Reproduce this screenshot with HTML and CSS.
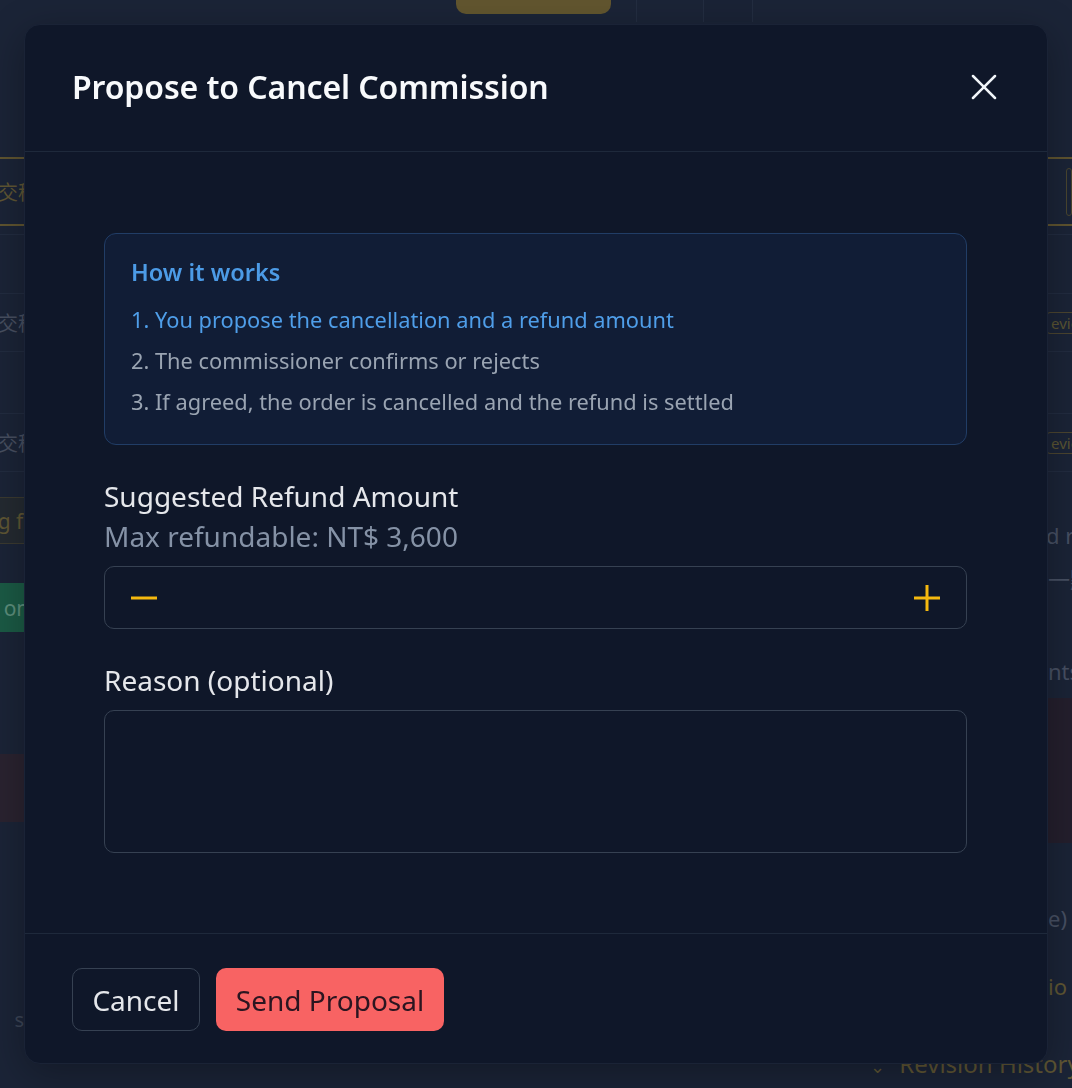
FILE: index.html
```html
<!DOCTYPE html>
<html lang="en">
<head>
<meta charset="utf-8">
<title>Propose to Cancel Commission</title>
<link rel="stylesheet" href="styles.css">
</head>
<body>
<div class="page">
  <div class="top-strip">
    <div class="top-left"></div>
    <div class="top-btn"></div>
    <div class="top-cell c1"></div>
    <div class="top-cell c2"></div>
    <div class="top-cell c3"></div>
    <div class="top-cell c4"></div>
  </div>
  <div class="page-main">
    <div class="side side-left">
      <div class="row row-gold"><span>交稿</span></div>
      <div class="row gap-a"></div>
      <div class="row row-text"><span>交稿</span></div>
      <div class="row gap-b"></div>
      <div class="row row-text"><span>交稿</span></div>
      <div class="chip chip-gold"><span>g fo</span></div>
      <div class="chip chip-green"><span>om</span></div>
      <div class="chip chip-red"></div>
      <div class="foot-text">s</div>
    </div>
    <div class="side side-right">
      <div class="row row-gold"><span class="pill"></span></div>
      <div class="row gap-a"></div>
      <div class="row row-text"><span class="badge">evie</span></div>
      <div class="row gap-b"></div>
      <div class="row row-text"><span class="badge">evie</span></div>
      <div class="r-text r1">d r</div>
      <div class="r-text r2">一點</div>
      <div class="r-text r3">nts</div>
      <div class="r-red"></div>
      <div class="r-text r4">e)</div>
      <div class="r-text r5 gold">io</div>
      <div class="r-text r6 gold"><span class="chev">⌄</span> Revision History</div>
    </div>
  </div>
</div>

<div class="overlay">
  <div class="modal" role="dialog" aria-labelledby="modal-title">
    <header class="modal-header">
      <h2 id="modal-title" class="modal-title">Propose to Cancel Commission</h2>
      <button class="close-btn" aria-label="Close">
        <svg width="26" height="26" viewBox="0 0 26 26" fill="none" stroke="currentColor" stroke-width="2.5" stroke-linecap="round"><path d="M2 2l22 22M24 2L2 24"/></svg>
      </button>
    </header>
    <div class="modal-body">
      <div class="info-box">
        <div class="info-title">How it works</div>
        <ol class="info-list">
          <li class="active">1. You propose the cancellation and a refund amount</li>
          <li>2. The commissioner confirms or rejects</li>
          <li>3. If agreed, the order is cancelled and the refund is settled</li>
        </ol>
      </div>
      <div class="field">
        <label class="field-label">Suggested Refund Amount</label>
        <div class="field-hint">Max refundable: NT$ 3,600</div>
        <div class="stepper">
          <button class="step-btn" aria-label="Decrease">
            <svg width="30" height="30" viewBox="0 0 30 30" fill="none" stroke="currentColor" stroke-width="3"><path d="M2 15h26" /></svg>
          </button>
          <input class="step-input" type="text" value="">
          <button class="step-btn" aria-label="Increase">
            <svg width="30" height="30" viewBox="0 0 30 30" fill="none" stroke="currentColor" stroke-width="3"><path d="M2 15h26M15 2v26" /></svg>
          </button>
        </div>
      </div>
      <div class="field field-reason">
        <label class="field-label">Reason (optional)</label>
        <textarea class="reason"></textarea>
      </div>
    </div>
    <footer class="modal-footer">
      <button class="btn btn-outline">Cancel</button>
      <button class="btn btn-danger">Send Proposal</button>
    </footer>
  </div>
</div>
</body>
</html>
```
FILE: styles.css
```css
* { box-sizing: border-box; }
html, body { margin: 0; padding: 0; }
body {
  width: 1072px;
  height: 1088px;
  overflow: hidden;
  background: #1b2437;
  font-family: "Noto Sans", "Open Sans", "Liberation Sans", "Noto Sans CJK TC", sans-serif;
  color: #e5e7eb;
}

/* ---------- background page (dimmed) ---------- */
.page { width: 1072px; height: 1088px; overflow: hidden; }
.top-strip {
  display: flex;
  height: 24px;
}
.top-left { width: 456px; }
.top-btn {
  width: 155px;
  height: 14px;
  background: #62562f;
  border-radius: 0 0 10px 10px;
}
.top-cell { height: 22px; border-left: 1px solid #232d41; }
.c1 { width: 25px; border-left: none; }
.c2 { width: 67px; }
.c3 { width: 49px; background: #1a2336; }
.c4 { width: 65px; }

.page-main {
  display: flex;
  justify-content: space-between;
  padding-top: 133px;
}
.side { width: 24px; display: flex; flex-direction: column; }
.row {
  display: flex;
  align-items: center;
  font-size: 20px;
  color: #474f60;
  white-space: nowrap;
  font-family: "Noto Sans CJK TC", "Noto Sans", sans-serif;
}
.side-left .row { justify-content: flex-end; }
.side-left .row span { margin-right: -14px; }
.row-gold {
  height: 69px;
  border-top: 2px solid #5f5430;
  border-bottom: 2px solid #5f5430;
  color: #5f5634;
}
.gap-a { height: 60px; border-top: 1px solid #222c40; margin-top: 8px; border-bottom: 1px solid #222c40; }
.row-text { height: 58px; border-bottom: 1px solid #222c40; }
.gap-b { height: 62px; border-bottom: 1px solid #222c40; }
.side-right .row { justify-content: flex-start; }
.pill { display: inline-block; width: 30px; height: 48px; border: 1px solid #4a4630; border-radius: 10px; margin-left: 18px; }
.badge {
  font-family: "Noto Sans", sans-serif;
  font-size: 15px;
  color: #5a5433;
  border: 1px solid #4b4530;
  border-radius: 4px;
  padding: 0 4px;
  margin-left: -2px;
}
.chip {
  display: flex;
  align-items: center;
  justify-content: flex-end;
  font-size: 21px;
  white-space: nowrap;
}
.chip span { margin-right: -12px; }
.chip-gold {
  height: 47px;
  margin-top: 25px;
  background: #242a31;
  color: #5f5634;
  border-top: 1px solid #3b3a30;
  border-bottom: 1px solid #3b3a30;
}
.chip-green { height: 49px; margin-top: 39px; background: #1b5a45; color: #5d8e7c; }
.chip-red { height: 68px; margin-top: 122px; background: #2a2330; }
.foot-text { margin-top: 184px; font-size: 20px; line-height: 28px; color: #3c4556; text-align: right; }

.r-text {
  font-size: 22px;
  line-height: 40px;
  height: 40px;
  color: #475063;
  white-space: nowrap;
}
.r-text.gold { color: #5f5634; }
.r1 { margin-top: 43px; margin-left: -2px; }
.r2 { margin-top: 3px; font-family: "Noto Sans CJK TC", sans-serif; }
.r3 { margin-top: 53px; }
.r-red { height: 145px; background: #241f2d; margin-top: 7px; }
.r4 { margin-top: 55px; }
.r5 { margin-top: 28px; }
.r6 { margin-top: 38px; margin-left: -178px; font-size: 24px; color: #58533a; }
.chev { font-size: 18px; margin-right: 8px; }

/* ---------- overlay + modal ---------- */
.overlay {
  position: fixed;
  inset: 0;
  display: flex;
  align-items: flex-start;
  justify-content: center;
  padding-top: 24px;
}
.modal {
  width: 1024px;
  height: 1040px;
  background: #0f1729;
  border: 1px solid #1a2336;
  border-radius: 16px;
  display: flex;
  flex-direction: column;
  box-shadow: 0 10px 40px rgba(0, 0, 0, 0.3);
}
.modal-header {
  height: 127px;
  flex: none;
  display: flex;
  align-items: center;
  justify-content: space-between;
  padding: 0 50px 0 47px;
  border-bottom: 1px solid #1e293b;
}
.modal-title {
  margin: 0;
  font-size: 32px;
  font-weight: 600;
  color: #f8fafc;
  letter-spacing: -0.1px;
  line-height: 40px;
  position: relative;
  top: -1px;
}
.close-btn {
  background: none;
  border: none;
  padding: 0;
  color: #f1f5f9;
  width: 26px;
  height: 26px;
  display: flex;
  position: relative;
  top: -1px;
}

.modal-body {
  flex: 1;
  padding: 81px 80px 0 79px;
  display: flex;
  flex-direction: column;
}
.info-box {
  height: 212px;
  background: #111d36;
  border: 1px solid #213d66;
  border-radius: 12px;
  padding: 22px 26px 0 26px;
}
.info-title {
  font-size: 23.5px;
  font-weight: 600;
  color: #4c9be6;
  line-height: 32px;
}
.info-list {
  list-style: none;
  margin: 0;
  padding: 0;
  margin-top: 17px;
}
.info-list li {
  font-size: 21.8px;
  line-height: 30px;
  color: #9aa4b2;
  margin-bottom: 11px;
  white-space: nowrap;
}
.info-list li.active { color: #4f9ee9; }

.field { display: flex; flex-direction: column; margin-top: 31px; }
.field-reason { margin-top: 31px; }
.field-label {
  font-size: 28px;
  line-height: 40px;
  color: #e5e7eb;
}
.field-hint {
  font-size: 28px;
  line-height: 40px;
  color: #8592a6;
}
.stepper {
  margin-top: 10px;
  height: 63px;
  border: 1px solid #364152;
  border-radius: 10px;
  display: flex;
  align-items: center;
  padding: 0 24px 0 24px;
}
.step-btn {
  background: none;
  border: none;
  padding: 0;
  color: #f5b90f;
  display: flex;
  width: 30px;
  height: 30px;
}
.step-input {
  flex: 1;
  min-width: 0;
  background: transparent;
  border: none;
  outline: none;
  color: #e5e7eb;
  font-size: 24px;
  text-align: center;
  font-family: inherit;
}
.reason {
  margin-top: 10px;
  height: 143px;
  background: transparent;
  border: 1px solid #364152;
  border-radius: 10px;
  resize: none;
  font-family: inherit;
  color: #e5e7eb;
}

.modal-footer {
  flex: none;
  height: 130px;
  border-top: 1px solid #1e293b;
  display: flex;
  align-items: center;
  gap: 16px;
  padding: 2px 47px 0;
}
.btn {
  height: 63px;
  font-family: inherit;
  font-size: 28px;
  border-radius: 10px;
  padding: 0;
}
.btn-outline {
  background: transparent;
  border: 1px solid #364152;
  color: #e5e7eb;
  width: 128px;
}
.btn-danger {
  background: #f86363;
  border: none;
  color: #2b1520;
  width: 228px;
}
```
